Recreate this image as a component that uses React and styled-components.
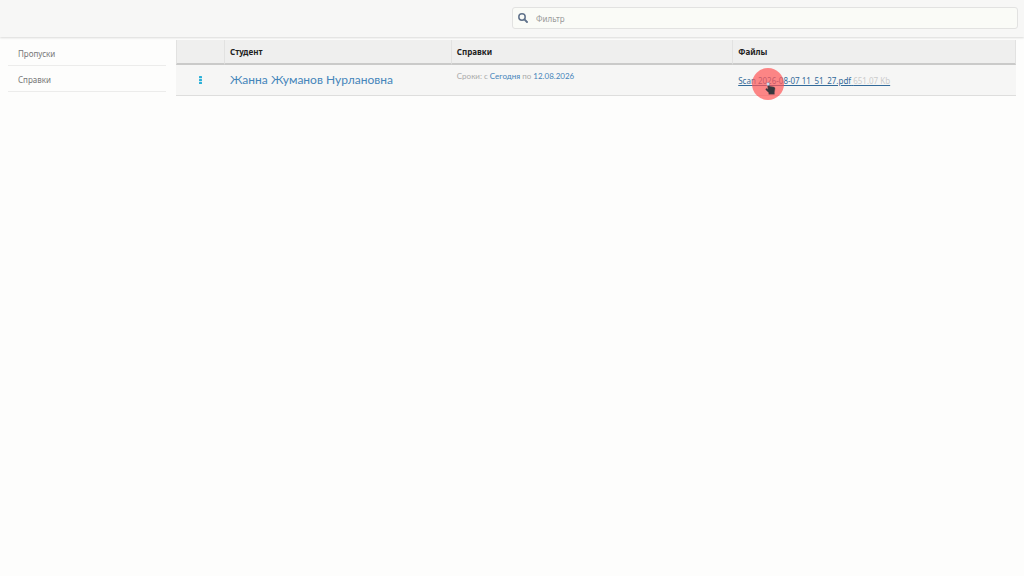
import React, { useState } from "react";
import styled, { createGlobalStyle } from "styled-components";

const rows = [
  {
    id: 1,
    student: "Жанна Жуманов Нурлановна",
    from: "Сегодня",
    to: "12.08.2026",
    file: "Scan 2026-08-07 11_51_27.pdf",
    size: "651.07 Kb",
  },
];

function App() {
  const [filter, setFilter] = useState("");

  const visible = rows.filter((row) =>
    row.student.toLowerCase().includes(filter.toLowerCase())
  );

  return (
    <>
      <GlobalStyle />
      <TopBar>
        <SearchBox>
          <SearchIcon />
          <input
            type="text"
            aria-label="Фильтр"
            placeholder="Фильтр"
            value={filter}
            onChange={(e) => setFilter(e.target.value)}
          />
        </SearchBox>
      </TopBar>
      <Content>
        <SideMenu>
          <a href="#passes">Пропуски</a>
          <a href="#notes">Справки</a>
        </SideMenu>
        <Table>
          <colgroup>
            <Col $width="48px" />
            <Col $width="27%" />
            <Col $width="33.5%" />
            <col />
          </colgroup>
          <thead>
            <tr>
              <th aria-label="Действия"></th>
              <th>Студент</th>
              <th>Справки</th>
              <th>Файлы</th>
            </tr>
          </thead>
          <tbody>
            {visible.map((row) => (
              <tr key={row.id}>
                <td>
                  <MenuButton type="button" aria-label="Меню">
                    <DotsIcon />
                  </MenuButton>
                </td>
                <td>
                  <StudentLink href="#student">{row.student}</StudentLink>
                </td>
                <DatesCell>
                  Сроки: с <b>{row.from}</b> по <b>{row.to}</b>
                </DatesCell>
                <FileCell>
                  <FileLink href="#file">
                    {row.file} <span>{row.size}</span>
                    <Pointer>
                      <HandIcon />
                    </Pointer>
                  </FileLink>
                </FileCell>
              </tr>
            ))}
          </tbody>
        </Table>
      </Content>
    </>
  );
}

const SearchIcon = () => (
  <svg width="10" height="10" viewBox="0 0 10 10" fill="none" aria-hidden="true">
    <circle cx="4" cy="4" r="3.2" stroke="#60728b" strokeWidth="1.5" />
    <path d="M6.4 6.4L9 9" stroke="#60728b" strokeWidth="1.9" strokeLinecap="round" />
  </svg>
);

const DotsIcon = () => (
  <svg width="3" height="8" viewBox="0 0 3 8" fill="#2ab0d8" aria-hidden="true">
    <rect x="0" y="0" width="3" height="2.2" rx="0.5" />
    <rect x="0" y="2.9" width="3" height="2.2" rx="0.5" />
    <rect x="0" y="5.8" width="3" height="2.2" rx="0.5" />
  </svg>
);

const HandIcon = () => (
  <svg width="11" height="13" viewBox="0 0 11 13" aria-hidden="true">
    <path
      d="M2.4 1.3C2.4 0.2 4.2 0.2 4.3 1.3L4.6 4.3L8.6 5C9.6 5.2 10.1 5.8 10 6.8L9.4 10.2V12.3H3.8V10.8L1 8C0.3 7.2 1.2 6.3 2 6.7L3 7.3Z"
      fill="#36383d"
      stroke="#6d4a50"
      strokeWidth="0.4"
    />
    <path d="M1.8 3.4V1.5C2 0.1 4.4 0.1 4.5 1.5V3.4Z" fill="#c9dcf2" />
  </svg>
);

const GlobalStyle = createGlobalStyle`
  * {
    box-sizing: border-box;
  }
  body {
    margin: 0;
    min-height: 100vh;
    background: #fdfdfc;
    color: #222;
    font-family: "Noto Sans", "Open Sans", sans-serif;
    font-size: 8px;
    line-height: 12px;
  }
  a {
    text-decoration: none;
  }
`;

const TopBar = styled.header`
  display: flex;
  justify-content: flex-end;
  padding: 7px 6px 8px;
  background: #f7f7f6;
  box-shadow: 0 1px 2px rgba(0, 0, 0, 0.14);
`;

const SearchBox = styled.label`
  display: flex;
  align-items: center;
  gap: 8px;
  width: 50%;
  height: 22px;
  padding: 0 5px;
  background: #fafbf7;
  border: 1px solid #e2e2e1;
  border-radius: 3px;

  input {
    flex: 1;
    padding: 1px 0 0;
    border: 0;
    outline: 0;
    background: none;
    color: #444;
    font: inherit;
  }
  input::placeholder {
    color: #999;
    opacity: 1;
  }
`;

const Content = styled.main`
  display: flex;
  align-items: flex-start;
  gap: 10px;
  padding: 3px 8px 8px;
`;

const SideMenu = styled.nav`
  display: flex;
  flex-direction: column;
  flex: 0 0 158px;

  a {
    padding: 8px 10px 5px;
    border-bottom: 1px solid #ececeb;
    color: #777;
  }
`;

const Col = styled.col`
  width: ${(props) => props.$width};
`;

const Table = styled.table`
  flex: 1;
  table-layout: fixed;
  border-collapse: separate;
  border-spacing: 0;

  th {
    height: 25px;
    padding: 0 5px;
    background: #efefee;
    border-left: 1px solid #e2e2e1;
    border-bottom: 2px solid #cacac9;
    color: #222;
    font-weight: 700;
    text-align: left;
  }
  th:last-child {
    border-right: 1px solid #e2e2e1;
  }
  td {
    height: 31px;
    padding: 0 6px;
    background: #f6f6f5;
    border-bottom: 1px solid #dededd;
  }
`;

const MenuButton = styled.button`
  display: flex;
  justify-content: center;
  width: 100%;
  padding: 2px 0;
  border: 0;
  background: none;
  cursor: pointer;
`;

const StudentLink = styled.a`
  color: #4585ba;
  font-family: Lato, "Noto Sans", sans-serif;
  font-size: 12px;
  line-height: 16px;
`;

const DatesCell = styled.td`
  color: #aaa;
  font-family: "Liberation Sans Narrow", Lato, sans-serif;
  vertical-align: top;

  && {
    padding-top: 5px;
  }
  b {
    color: #4585ba;
    font-weight: 400;
  }
`;

const FileCell = styled.td`
  && {
    padding-top: 2px;
  }
`;

const FileLink = styled.a`
  position: relative;
  color: #336a99;
  text-decoration: underline;

  span {
    color: #ccc;
  }
`;

const Pointer = styled.i`
  position: absolute;
  top: -7px;
  left: 14px;
  display: flex;
  align-items: flex-end;
  justify-content: center;
  width: 32px;
  height: 32px;
  padding: 0 0 5px 4px;
  border-radius: 50%;
  background: rgba(255, 85, 85, 0.7);
  pointer-events: none;
`;

export default App;
